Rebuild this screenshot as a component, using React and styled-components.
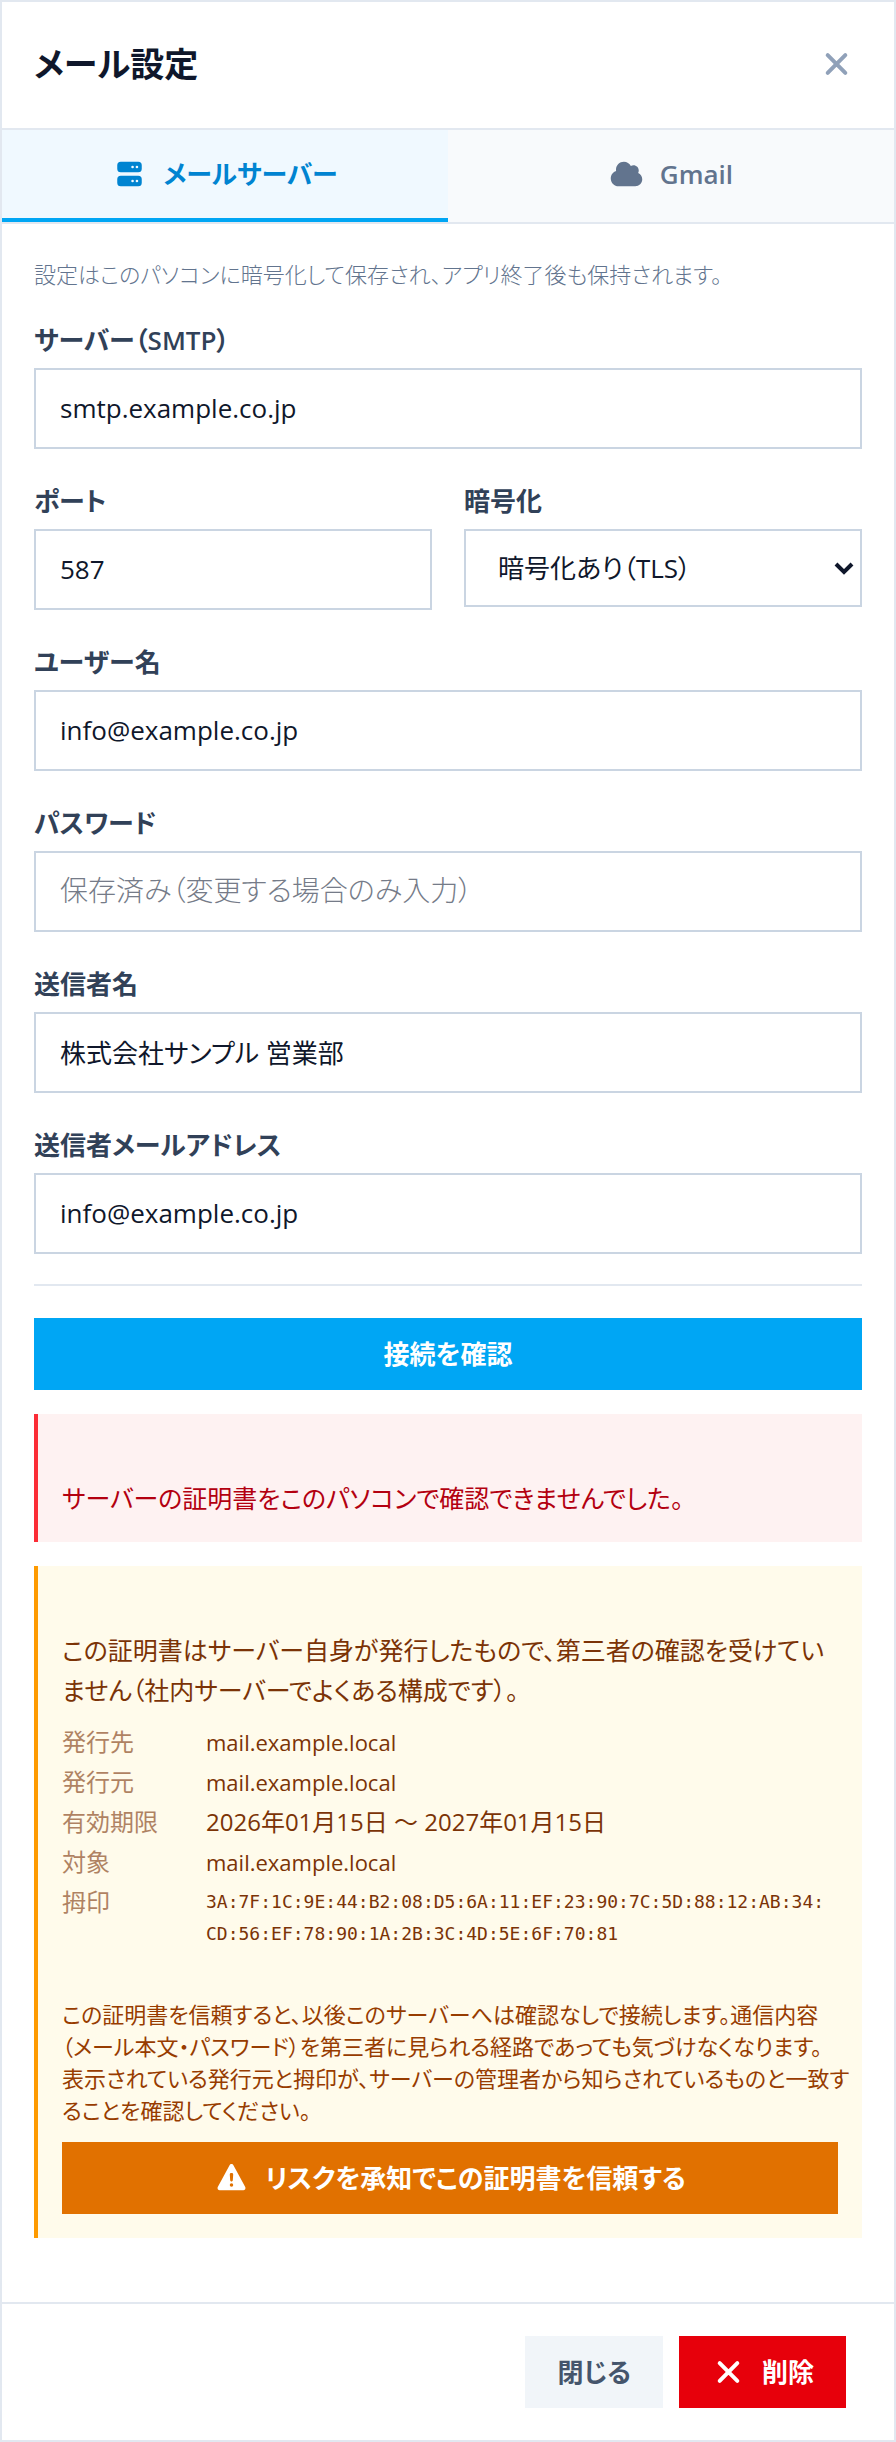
import React, { useState } from "react";
import styled, { createGlobalStyle, css } from "styled-components";

const GlobalStyle = createGlobalStyle`
    * {
        box-sizing: border-box;
    }
    body {
        margin: 0;
        background: #ffffff;
        color: #0f172b;
        font-family: "Open Sans", "Noto Sans CJK JP", sans-serif;
        font-size: 26px;
        line-height: 40px;
        font-feature-settings: "palt";
    }
    button, input, select {
        font: inherit;
        font-feature-settings: inherit;
        color: inherit;
        border-radius: 0;
        margin: 0;
    }
    p, h1, dl, dd {
        margin: 0;
    }
`;

const Dialog = styled.section`
    border: 2px solid #e2e8f0;
    background: #ffffff;
`;

const Header = styled.header`
    display: flex;
    align-items: center;
    justify-content: space-between;
    height: 128px;
    padding: 0 32px 2px;
    border-bottom: 2px solid #e2e8f0;
`;

const Title = styled.h1`
    font-size: 34px;
    line-height: 56px;
    font-weight: 600;
`;

const CloseIcon = styled.button`
    display: flex;
    padding: 8px;
    border: 0;
    background: none;
    color: #90a1b9;
    cursor: pointer;
`;

const Tabs = styled.div`
    display: grid;
    grid-template-columns: 1fr 1fr;
    border-bottom: 2px solid #e2e8f0;
`;

const Tab = styled.button`
    display: flex;
    align-items: center;
    justify-content: center;
    gap: 16px;
    height: 92px;
    padding: 0;
    border: 0;
    border-bottom: 4px solid transparent;
    background: #f8fafc;
    color: #62748e;
    font-weight: 600;
    cursor: pointer;
    ${props => props.$active && css`
        border-bottom-color: #00a6f4;
        background: #f0f9ff;
        color: #0084d1;
    `}
`;

const Icon = styled.svg`
    width: 35px;
    height: 28px;
    flex: none;
    fill: currentColor;
`;

const Body = styled.div`
    padding: 32px 32px 64px;
`;

const Lead = styled.p`
    margin-bottom: 28px;
    color: #62748e;
    font-size: 22px;
    line-height: 36px;
    font-weight: 300;
`;

const Fields = styled.div`
    display: grid;
    grid-template-columns: 1fr 1fr;
    gap: 32px;
    align-items: start;
`;

const FieldBox = styled.div`
    display: flex;
    flex-direction: column;
    gap: 8px;
    grid-column: ${props => (props.$half ? "auto" : "1 / -1")};
`;

const Label = styled.label`
    color: #314158;
    font-weight: 600;
`;

const Input = styled.input`
    width: 100%;
    height: 81px;
    padding: 0 24px 2px;
    border: 2px solid #cad5e2;
    background: #ffffff;
    &::placeholder {
        color: #757b88;
        font-size: 28px;
        font-weight: 300;
        opacity: 1;
    }
`;

const SelectWrap = styled.div`
    position: relative;
    svg {
        position: absolute;
        top: 32px;
        right: 8px;
        pointer-events: none;
    }
`;

const Select = styled.select`
    display: block;
    width: 100%;
    height: 78px;
    padding: 0 32px;
    border: 2px solid #cad5e2;
    background: #ffffff;
    appearance: none;
`;

const Button = styled.button`
    display: flex;
    align-items: center;
    justify-content: center;
    gap: 16px;
    height: 72px;
    padding: 0 32px;
    border: 0;
    font-size: 26px;
    font-weight: 600;
    cursor: pointer;
    width: ${props => (props.$block ? "100%" : "auto")};
    background: ${props => props.$bg};
    color: ${props => props.$color || "#ffffff"};
`;

const Check = styled.div`
    display: flex;
    flex-direction: column;
    gap: 24px;
    margin-top: 30px;
    padding-top: 32px;
    border-top: 2px solid #e2e8f0;
`;

const Alert = styled.div`
    padding: 64px 24px 24px;
    border-left: 4px solid ${props => (props.$warning ? "#fe9a00" : "#fb2c36")};
    background: ${props => (props.$warning ? "#fffbeb" : "#fef2f2")};
    color: ${props => (props.$warning ? "#7b3306" : "#b30010")};
    font-size: 25px;
`;

const CertList = styled.dl`
    display: grid;
    grid-template-columns: 128px 1fr;
    column-gap: 16px;
    margin: 12px 0 48px;
    font-size: 24px;
    dt {
        opacity: 0.6;
    }
`;

const HostName = styled.dd`
    font-size: 22px;
`;

const Fingerprint = styled.dd`
    padding-top: 4px;
    font-family: "DejaVu Sans Mono", monospace;
    font-size: 18px;
    line-height: 32px;
`;

const Note = styled.p`
    margin: 0 -16px 16px 0;
    color: #973c00;
    font-size: 22px;
    line-height: 32px;
`;

const Footer = styled.footer`
    display: flex;
    justify-content: flex-end;
    gap: 16px;
    padding: 32px 48px;
    border-top: 2px solid #e2e8f0;
`;

const XMark = () => (
    <Icon viewBox="0 0 35 28" aria-hidden="true">
        <path d="M8.7 5.2l17.6 17.6M26.3 5.2l-17.6 17.6" stroke="currentColor" strokeWidth="4" strokeLinecap="round" />
    </Icon>
);

const ServerIcon = () => (
    <Icon viewBox="0 0 448 512" aria-hidden="true">
        <path fillRule="evenodd" d="M64 32h320a64 64 0 0 1 64 64v64a64 64 0 0 1-64 64H64a64 64 0 0 1-64-64V96a64 64 0 0 1 64-64zM280 104a24 24 0 1 0 0 48 24 24 0 1 0 0-48zM360 104a24 24 0 1 0 0 48 24 24 0 1 0 0-48zM64 288h320a64 64 0 0 1 64 64v64a64 64 0 0 1-64 64H64a64 64 0 0 1-64-64v-64a64 64 0 0 1 64-64zM280 360a24 24 0 1 0 0 48 24 24 0 1 0 0-48zM360 360a24 24 0 1 0 0 48 24 24 0 1 0 0-48z" />
    </Icon>
);

const CloudIcon = () => (
    <Icon viewBox="0 0 576 512" aria-hidden="true">
        <path d="M0 336c0 79.5 64.5 144 144 144l304 0c70.7 0 128-57.3 128-128 0-51.6-30.5-96.1-74.5-116.3 6.7-13 10.5-27.7 10.5-43.3 0-53-43-96-96-96-17.7 0-34.2 4.8-48.4 13.1-24.1-45.8-72.2-77.1-127.6-77.1-79.5 0-144 64.5-144 144 0 8 .7 15.9 1.9 23.5-56.9 19.2-97.9 73.1-97.9 136.5z" />
    </Icon>
);

const WarningIcon = () => (
    <Icon viewBox="0 0 512 512" aria-hidden="true">
        <path d="M256 0c14.7 0 28.2 8.1 35.2 21l216 400c6.7 12.4 6.4 27.4-.8 39.5S486.1 480 472 480L40 480c-14.1 0-27.2-7.4-34.4-19.5s-7.5-27.1-.8-39.5l216-400c7-12.9 20.5-21 35.2-21zm0 352a32 32 0 1 0 0 64 32 32 0 1 0 0-64zm0-192c-18.2 0-32.7 15.5-31.4 33.7l7.4 104c.9 12.5 11.4 22.3 23.9 22.3 12.6 0 23-9.7 23.9-22.3l7.4-104c1.3-18.2-13.1-33.7-31.4-33.7z" />
    </Icon>
);

const Field = ({ id, label, half, ...rest }) => (
    <FieldBox $half={half}>
        <Label htmlFor={id}>{label}</Label>
        <Input id={id} {...rest} />
    </FieldBox>
);

const thumbprint = "3A:7F:1C:9E:44:B2:08:D5:6A:11:EF:23:90:7C:5D:88:12:AB:34:CD:56:EF:78:90:1A:2B:3C:4D:5E:6F:70:81";

export default () => {

    const [ tab, setTab ] = useState("server");

    return (
        <>
            <GlobalStyle />
            <Dialog>
                <Header>
                    <Title>メール設定</Title>
                    <CloseIcon type="button" aria-label="閉じる"><XMark /></CloseIcon>
                </Header>
                <Tabs>
                    <Tab type="button" $active={tab === "server"} onClick={() => setTab("server")}>
                        <ServerIcon />メールサーバー
                    </Tab>
                    <Tab type="button" $active={tab === "gmail"} onClick={() => setTab("gmail")}>
                        <CloudIcon />Gmail
                    </Tab>
                </Tabs>
                <Body>
                    <Lead>設定はこのパソコンに暗号化して保存され、アプリ終了後も保持されます。</Lead>
                    <Fields>
                        <Field id="host" label="サーバー（SMTP）" defaultValue="smtp.example.co.jp" />
                        <Field id="port" label="ポート" half defaultValue="587" />
                        <FieldBox $half>
                            <Label htmlFor="secure">暗号化</Label>
                            <SelectWrap>
                                <Select id="secure" defaultValue="tls">
                                    <option value="tls">暗号化あり（TLS）</option>
                                    <option value="none">暗号化なし</option>
                                </Select>
                                <svg width="20" height="14" viewBox="0 0 20 14" aria-hidden="true">
                                    <path d="M2 3l8 8 8-8" fill="none" stroke="#0f172b" strokeWidth="4" />
                                </svg>
                            </SelectWrap>
                        </FieldBox>
                        <Field id="user" label="ユーザー名" defaultValue="info@example.co.jp" />
                        <Field id="pass" label="パスワード" type="password" placeholder="保存済み（変更する場合のみ入力）" />
                        <Field id="fromName" label="送信者名" defaultValue="株式会社サンプル 営業部" />
                        <Field id="fromMail" label="送信者メールアドレス" defaultValue="info@example.co.jp" />
                    </Fields>
                    <Check>
                        <Button type="button" $block $bg="#00a6f4">接続を確認</Button>
                        <Alert role="alert">サーバーの証明書をこのパソコンで確認できませんでした。</Alert>
                        <Alert $warning>
                            <p>この証明書はサーバー自身が発行したもので、第三者の確認を受けていません（社内サーバーでよくある構成です）。</p>
                            <CertList>
                                <dt>発行先</dt>
                                <HostName>mail.example.local</HostName>
                                <dt>発行元</dt>
                                <HostName>mail.example.local</HostName>
                                <dt>有効期限</dt>
                                <dd>2026年01月15日 ～ 2027年01月15日</dd>
                                <dt>対象</dt>
                                <HostName>mail.example.local</HostName>
                                <dt>拇印</dt>
                                <Fingerprint>
                                    {thumbprint.split(":").map((byte, i) => (
                                        <React.Fragment key={i}>{i > 0 && <>:<wbr /></>}{byte}</React.Fragment>
                                    ))}
                                </Fingerprint>
                            </CertList>
                            <Note>
                                この証明書を信頼すると、以後このサーバーへは確認なしで接続します。通信内容<br />
                                （メール本文・パスワード）を第三者に見られる経路であっても気づけなくなります。<br />
                                表示されている発行元と拇印が、サーバーの管理者から知らされているものと一致することを確認してください。
                            </Note>
                            <Button type="button" $block $bg="#e17100"><WarningIcon />リスクを承知でこの証明書を信頼する</Button>
                        </Alert>
                    </Check>
                </Body>
                <Footer>
                    <Button type="button" $bg="#f1f5f9" $color="#45556c">閉じる</Button>
                    <Button type="button" $bg="#e7000b"><XMark />削除</Button>
                </Footer>
            </Dialog>
        </>
    );
};
